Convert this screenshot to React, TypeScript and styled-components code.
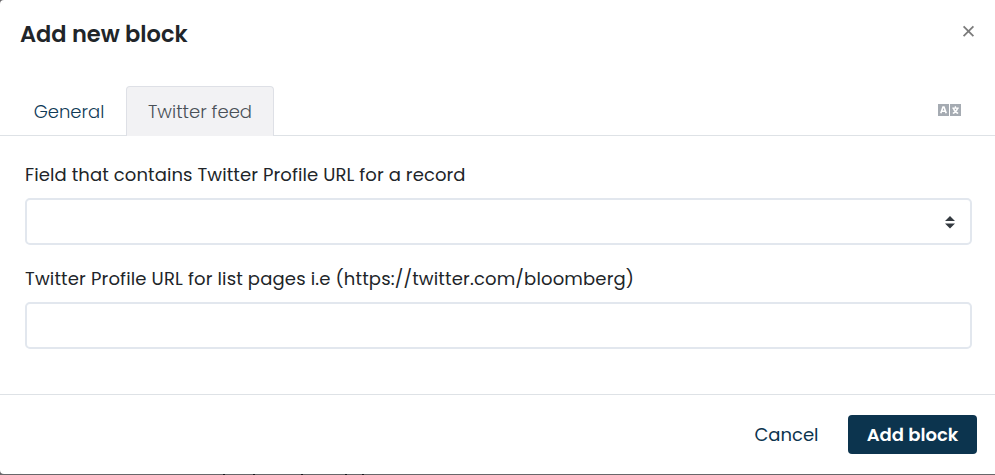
import React from 'react';
import styled, { createGlobalStyle, css } from 'styled-components';

const GlobalStyle = createGlobalStyle`
  *, *::before, *::after { box-sizing: border-box; }
  body {
    margin: 0;
    background: #68676a;
    color: #212529;
    font-family: Poppins, sans-serif;
    overflow: hidden;
  }
  button, input { font: inherit; }
`;

const Backdrop = styled.div`
  display: flex;
  flex-direction: column;
  height: 475px;
  background: #68676a;
`;

const Modal = styled.section`
  display: flex;
  flex-direction: column;
  flex: none;
  height: 474px;
  background: #fff;
  border-radius: 4px 0 0 4px;
`;

/* Tops of the dimmed page content showing under the dialog. */
const PageSliver = styled.div`
  display: flex;
  height: 1px;
  padding-left: 223px;
`;

const Tip = styled.span<{ $gap: number }>`
  width: 2px;
  height: 1px;
  margin-right: ${({ $gap }) => $gap}px;
  background: #15161b;
`;

const Header = styled.header`
  display: flex;
  justify-content: space-between;
  height: 86px;
  padding: 19px 20px 0;
`;

const Title = styled.h2`
  margin: 0;
  font-size: 22.5px;
  line-height: 31px;
  font-weight: 600;
`;

const CloseButton = styled.button`
  display: flex;
  width: 13px;
  height: 13px;
  margin-top: 6px;
  padding: 0;
  border: 0;
  background: none;
`;

const TabBar = styled.nav`
  display: flex;
  height: 50px;
  padding: 0 34px 0 12px;
  border-bottom: 1px solid #dee2e6;
`;

const Tab = styled.button<{ $active?: boolean }>`
  height: 50px;
  width: 114px;
  padding: 0;
  border: 1px solid transparent;
  border-bottom: 0;
  border-radius: 4px 4px 0 0;
  background: none;
  color: #0f3a56;
  font-size: 18px;
  font-weight: 300;
  ${({ $active }) =>
    $active &&
    css`
      width: 148px;
      background: #f2f2f4;
      border-color: #dee0e6;
      color: #495057;
    `}
`;

const TranslateButton = styled.button`
  display: flex;
  height: 12px;
  margin: 18px 0 0 auto;
  padding: 0;
  border: 0;
  background: none;
`;

const Body = styled.main`
  flex: 1;
  padding: 25px 23px 0 25px;
`;

const Field = styled.div`
  height: 104px;
`;

const Label = styled.label<{ $tracking: number }>`
  display: block;
  height: 37px;
  line-height: 28px;
  font-size: 18px;
  white-space: nowrap;
  letter-spacing: ${({ $tracking }) => $tracking}px;
`;

const controlBox = css`
  display: flex;
  width: 100%;
  height: 47px;
  padding: 0 15px;
  border: 2px solid #e2e7ee;
  border-radius: 5px;
  background: #fff;
  outline: none;
`;

const SelectBox = styled.button`
  ${controlBox}
  align-items: center;
  justify-content: flex-end;
  padding-top: 2px;
`;

const TextInput = styled.input`
  ${controlBox}
`;

const Footer = styled.footer`
  display: flex;
  justify-content: flex-end;
  height: 80px;
  padding: 20px 18px 0;
  border-top: 1px solid #dee2e6;
`;

const ActionButton = styled.button<{ $primary?: boolean }>`
  width: ${({ $primary }) => ($primary ? 129 : 123)}px;
  height: 39px;
  padding: 0;
  border: 0;
  border-radius: 4px;
  background: ${({ $primary }) => ($primary ? '#0c344e' : 'transparent')};
  color: ${({ $primary }) => ($primary ? '#fff' : '#0c344e')};
  font-size: 18px;
  font-weight: ${({ $primary }) => ($primary ? 600 : 400)};
`;

const CloseIcon = () => (
  <svg width="13" height="13" viewBox="0 0 13 13" fill="none" stroke="#7b7b7b" strokeWidth="1.8">
    <path d="M1.6 1.4 11.4 11.2M11.4 1.4 1.6 11.2" />
  </svg>
);

const TranslateIcon = () => (
  <svg width="23" height="12" viewBox="0 0 23 12" fill="none">
    <path fill="#a5abb2" d="M0 0h11v12H0zM12 0h11v12H12z" />
    <path stroke="#fff" strokeWidth="1.6" d="M2.8 9.2 5 3h1l2.2 6.2M3.8 7.3h3.6" />
    <path stroke="#fff" strokeWidth="1.3" d="M14.3 4.2h6.5M17.4 2.3v1.9M19.5 4.5c-.6 2.1-2 3.8-4.7 4.9M15.5 4.5c.6 2.1 2 3.8 4.7 4.9" />
  </svg>
);

const SortIcon = () => (
  <svg width="10" height="12.5" viewBox="0 0 4 5">
    <path fill="#343a40" d="M2 0L0 2h4zm0 5L0 3h4z" />
  </svg>
);

export default function App() {
  return (
    <>
      <GlobalStyle />
      <Backdrop>
        <Modal role="dialog" aria-labelledby="dialog-title">
          <Header>
            <Title id="dialog-title">Add new block</Title>
            <CloseButton aria-label="Close"><CloseIcon /></CloseButton>
          </Header>
          <TabBar>
            <Tab>General</Tab>
            <Tab $active>Twitter feed</Tab>
            <TranslateButton aria-label="Translate"><TranslateIcon /></TranslateButton>
          </TabBar>
          <Body>
            <Field>
              <Label $tracking={0.1}>Field that contains Twitter Profile URL for a record</Label>
              <SelectBox aria-label="Profile URL field"><SortIcon /></SelectBox>
            </Field>
            <Field>
              <Label $tracking={0.155} htmlFor="list-url">
                Twitter Profile URL for list pages i.e (https://twitter.com/bloomberg)
              </Label>
              <TextInput id="list-url" />
            </Field>
          </Body>
          <Footer>
            <ActionButton>Cancel</ActionButton>
            <ActionButton $primary>Add block</ActionButton>
          </Footer>
        </Modal>
        <PageSliver>
          {[28, 46, 42, 15, 0].map((gap, i) => (
            <Tip key={i} $gap={gap} />
          ))}
        </PageSliver>
      </Backdrop>
    </>
  );
}
